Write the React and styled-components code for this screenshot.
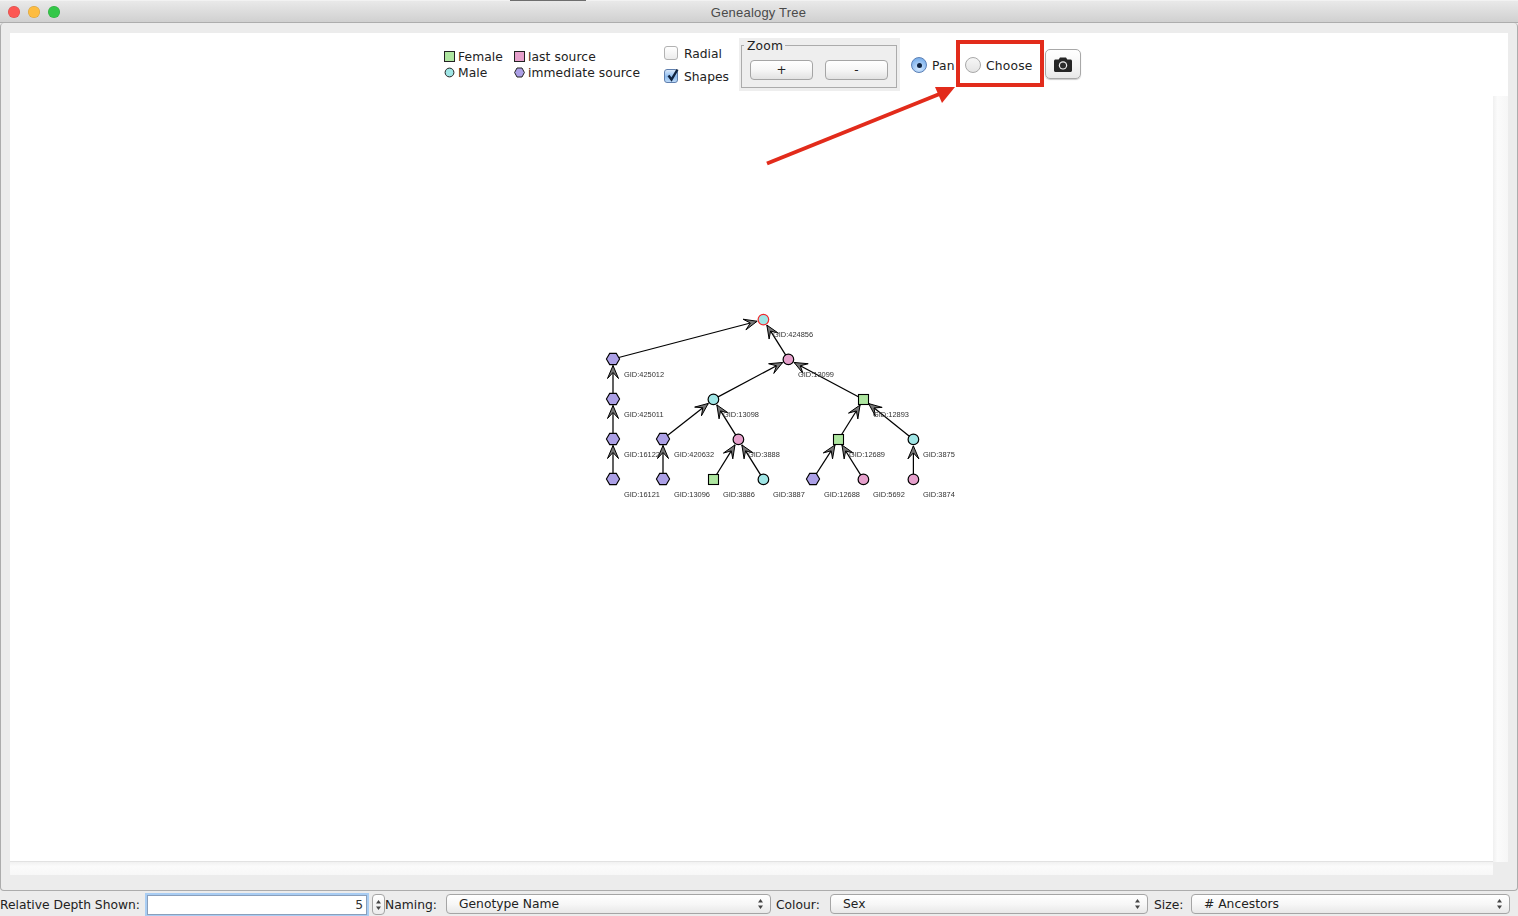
import React from 'react';
import styled, { createGlobalStyle } from 'styled-components';

const Global = createGlobalStyle`
  html, body { margin: 0; padding: 0; background: #ececec; }
  body { font-family: "DejaVu Sans", "Noto Sans", sans-serif; overflow: hidden; }
`;

const Win = styled.div`
  position: relative;
  width: 1518px;
  height: 916px;
  display: flex;
  flex-direction: column;
  background: #ececec;
  color: #222;
  font-size: 12.3px;
  overflow: hidden;
`;
const TitleBar = styled.div`
  height: 23px;
  box-sizing: border-box;
  flex: none;
  position: relative;
  display: flex;
  align-items: center;
  justify-content: center;
  background: linear-gradient(#e9e9e9, #d0d0d0);
  border-top: 1px solid #f2f2f2;
  border-bottom: 1px solid #adadad;
`;
const TopSliver = styled.span`
  position: absolute;
  left: 510px;
  top: -1px;
  width: 76px;
  height: 1px;
  background: #6e6e6e;
`;
const Lights = styled.div`
  position: absolute;
  left: 8px;
  top: 5px;
  display: flex;
  gap: 8px;
`;
const Light = styled.span`
  width: 12px;
  height: 12px;
  border-radius: 50%;
  background: ${p => p.$c};
  box-shadow: inset 0 0 0 0.5px rgba(0,0,0,0.16);
`;
const Title = styled.div`
  font-family: "Liberation Sans", sans-serif;
  font-size: 13px;
  color: #4a4a4a;
  letter-spacing: 0.2px;
  margin: 2px 1px 0 0;
`;
const Panel = styled.div`
  flex: none;
  height: 868px;
  box-sizing: border-box;
  border: 1px solid #acacac;
  border-top: none;
  border-radius: 4px;
  padding: 10px 9px 15px 9px;
  display: flex;
  flex-direction: column;
`;
const Toolbar = styled.div`
  height: 63px;
  flex: none;
  background: #fff;
  display: flex;
  align-items: flex-start;
  padding-left: 433px;
`;
const Legend = styled.div`
  display: grid;
  grid-template-columns: 70px auto;
  grid-auto-rows: 16px;
  margin-top: 16px;
  width: 221px;
  flex: none;
`;
const LegendItem = styled.div`
  display: flex;
  align-items: center;
  gap: 3px;
  line-height: 16px;
  letter-spacing: 0.08px;
`;
const Swatch = styled.svg`
  width: 11px;
  height: 11px;
  flex: none;
  margin: 0 0 2px 1px;
`;
const Checks = styled.div`
  width: 75px;
  flex: none;
  display: flex;
  flex-direction: column;
  gap: 6px;
  margin-top: 12px;
`;
const CheckRow = styled.div`
  display: flex;
  align-items: center;
  gap: 6px;
  height: 17px;
`;
const CheckBox = styled.span`
  position: relative;
  width: 14px;
  height: 14px;
  box-sizing: border-box;
  flex: none;
  margin-bottom: 1px;
  border-radius: 3px;
  border: 1px solid ${p => (p.$on ? '#5f7fae' : '#b2b2b2')};
  background: ${p => (p.$on ? 'linear-gradient(#d8e8fa, #8fbdef 55%, #bcd9f7)' : 'linear-gradient(#fff, #ececec)')};
`;
const Tick = styled.svg`
  position: absolute;
  left: 0;
  top: -3px;
  width: 16px;
  height: 16px;
`;
const ZoomWrap = styled.div`
  width: 161px;
  height: 53px;
  box-sizing: border-box;
  flex: none;
  margin-top: 5px;
  background: #eeeeee;
  padding: 7px 3px 3px 2px;
`;
const ZoomGroup = styled.div`
  position: relative;
  height: 43px;
  box-sizing: border-box;
  border: 1px solid #ababab;
  display: flex;
  gap: 12px;
  padding: 14px 8px 0 8px;
`;
const ZoomLegend = styled.span`
  position: absolute;
  left: 2px;
  top: -8px;
  background: #eeeeee;
  padding: 0 2px 0 3px;
  line-height: 16px;
  letter-spacing: 0.2px;
`;
const PushButton = styled.div`
  width: 63px;
  height: 20px;
  box-sizing: border-box;
  border: 1px solid #a5a5a5;
  border-radius: 4px;
  background: linear-gradient(#fff, #f6f6f6 50%, #e2e2e2);
  display: flex;
  align-items: center;
  justify-content: center;
  font-size: 12px;
`;
const RadioGroup = styled.div`
  flex: none;
  display: flex;
  align-items: center;
  gap: 5px;
  height: 17px;
  margin-top: 24px;
  margin-left: ${p => p.$ml}px;
  width: ${p => p.$w}px;
  letter-spacing: 0.2px;
`;
const Radio = styled.span`
  width: 16px;
  height: 16px;
  box-sizing: border-box;
  flex: none;
  margin-bottom: 1px;
  border-radius: 50%;
  display: flex;
  align-items: center;
  justify-content: center;
  border: 1px solid ${p => (p.$on ? '#5a7fb5' : '#a8a8a8')};
  background: ${p => (p.$on ? 'radial-gradient(circle at 50% 75%, #d3e8ff, #7fb2ec 75%)' : 'linear-gradient(#f6f6f6, #e4e4e4)')};
`;
const Dot = styled.span`
  width: 5px;
  height: 5px;
  border-radius: 50%;
  background: #10233f;
`;
const CameraButton = styled.div`
  flex: none;
  width: 36px;
  height: 30px;
  box-sizing: border-box;
  margin-top: 16px;
  margin-left: 11px;
  border: 1px solid #a8a8a8;
  border-radius: 5px;
  box-shadow: 0 1px 1px rgba(0,0,0,0.2);
  background: linear-gradient(#fff, #f5f5f5 60%, #e8e8e8);
  display: flex;
  align-items: center;
  justify-content: center;
`;
const ScrollRow = styled.div`
  flex: none;
  height: 766px;
  display: flex;
`;
const Canvas = styled.div`
  flex: 1;
  background: #fff;
  border-bottom: 1px solid #e2e2e2;
`;
const GraphSvg = styled.svg`
  display: block;
  width: 100%;
  height: 100%;
`;
const LabelGroup = styled.g`
  filter: grayscale(1);
  font-family: "Liberation Sans", sans-serif;
  font-size: 7.45px;
  fill: #333;
`;
const VScroll = styled.div`
  width: 15px;
  flex: none;
  background: linear-gradient(90deg, #f0f0f0, #fbfbfb 30%, #f6f6f6);
`;
const HScroll = styled.div`
  height: 13px;
  flex: none;
  margin-right: 15px;
  background: linear-gradient(#f1f1f1, #fbfbfb 35%, #f7f7f7);
`;
const BottomBar = styled.div`
  flex: none;
  height: 25px;
  display: flex;
  align-items: flex-start;
  padding: 3px 0 0 0;
  box-sizing: border-box;
`;
const BarLabel = styled.span`
  flex: none;
  width: ${p => p.$w}px;
  line-height: 20px;
  margin-top: 1px;
  white-space: nowrap;
`;
const NumberField = styled.div`
  flex: none;
  width: 220px;
  height: 20px;
  margin: 1px 0 0 1px;
  box-sizing: border-box;
  background: #fff;
  border: 1px solid #8a9fbb;
  box-shadow: 0 0 0 2px #a9cdf3;
  text-align: right;
  padding-right: 3px;
  line-height: 18px;
  color: #333;
`;
const Spinner = styled.div`
  flex: none;
  width: 13px;
  height: 21px;
  margin: 0 0 0 5px;
  box-sizing: border-box;
  border: 1px solid #a5a5a5;
  border-radius: 4px;
  background: linear-gradient(#fff, #ececec);
  display: flex;
  align-items: center;
  justify-content: center;
`;
const Select = styled.div`
  flex: none;
  width: ${p => p.$w}px;
  height: 20px;
  box-sizing: border-box;
  border: 1px solid #a5a5a5;
  border-radius: 4px;
  background: linear-gradient(#fff, #f7f7f7 50%, #e8e8e8);
  display: flex;
  align-items: center;
  justify-content: space-between;
  padding: 0 6px 0 12px;
  line-height: 18px;
`;
const SelectGap = styled.span`
  flex: none;
  width: ${p => p.$w}px;
`;
const UpDown = styled.svg`
  width: 7px;
  height: 12px;
  flex: none;
`;
const Callout = styled.div`
  position: absolute;
  left: 956px;
  top: 40px;
  width: 88px;
  height: 47px;
  box-sizing: border-box;
  border: 4px solid #e22b1b;
`;
const ArrowOverlay = styled.svg`
  position: absolute;
  left: 760px;
  top: 80px;
  width: 200px;
  height: 90px;
`;

const COLORS = { teal: '#a0e6e6', pink: '#e6a0cc', green: '#aee6a0', violet: '#aca0e6' };

const nodes = {
  root: [763.4, 319.6, 'circle', 'teal'],
  a: [788.4, 359.4, 'circle', 'pink'],
  h1: [613, 359, 'hex', 'violet'],
  h2: [613, 399, 'hex', 'violet'],
  b: [713.4, 399.4, 'circle', 'teal'],
  c: [863.5, 399.5, 'square', 'green'],
  h3: [613, 439, 'hex', 'violet'],
  h4: [663, 439, 'hex', 'violet'],
  d: [738.4, 439.4, 'circle', 'pink'],
  e: [838.5, 439.5, 'square', 'green'],
  f: [913.4, 439.4, 'circle', 'teal'],
  h5: [613, 479, 'hex', 'violet'],
  h6: [663, 479, 'hex', 'violet'],
  g: [713.5, 479.5, 'square', 'green'],
  i: [763.4, 479.4, 'circle', 'teal'],
  j: [813, 479, 'hex', 'violet'],
  k: [863.4, 479.4, 'circle', 'pink'],
  l: [913.4, 479.4, 'circle', 'pink'],
};
const edges = [
  ['h1', 'root'], ['a', 'root'], ['b', 'a'], ['c', 'a'], ['h2', 'h1'], ['h3', 'h2'], ['h5', 'h3'],
  ['h4', 'b'], ['d', 'b'], ['h6', 'h4'], ['g', 'd'], ['i', 'd'], ['e', 'c'], ['f', 'c'],
  ['j', 'e'], ['k', 'e'], ['l', 'f'],
];
const labels = [
  [773, 334, '424856'], [624, 374, '425012'], [798, 374, '13099'], [624, 414, '425011'],
  [723, 414, '13098'], [873, 414, '12893'], [624, 454, '16122'], [674, 454, '420632'],
  [748, 454, '3888'], [849, 454, '12689'], [923, 454, '3875'], [624, 494, '16121'],
  [674, 494, '13096'], [723, 494, '3886'], [773, 494, '3887'], [824, 494, '12688'],
  [873, 494, '5692'], [923, 494, '3874'],
];

const hexPoints = (x, y) => `${x - 6.6},${y} ${x - 3.3},${y - 5.6} ${x + 3.3},${y - 5.6} ${x + 6.6},${y} ${x + 3.3},${y + 5.6} ${x - 3.3},${y + 5.6}`;

function Edge({ from, to }) {
  const [x1, y1] = nodes[from];
  const [x2, y2] = nodes[to];
  const dx = x2 - x1, dy = y2 - y1;
  const len = Math.hypot(dx, dy);
  const ux = dx / len, uy = dy / len;
  const tx = x2 - ux * 6.5, ty = y2 - uy * 6.5;
  const nx = -uy, ny = ux;
  const wing = s => `${tx - ux * 13 + nx * s * 5.5},${ty - uy * 13 + ny * s * 5.5}`;
  const notch = `${tx - ux * 7},${ty - uy * 7}`;
  return (
    <g>
      <line x1={x1} y1={y1} x2={tx} y2={ty} stroke="#000" strokeWidth="1.25" />
      <polygon points={`${tx},${ty} ${wing(1)} ${notch} ${wing(-1)}`} fill="#777" stroke="#000" strokeWidth="1" />
    </g>
  );
}

function Node({ id }) {
  const [x, y, shape, color] = nodes[id];
  const fill = COLORS[color];
  const stroke = id === 'root' ? '#f0282d' : '#000';
  if (shape === 'circle') return <circle cx={x} cy={y} r="5.3" fill={fill} stroke={stroke} strokeWidth="1.2" />;
  if (shape === 'square') return <rect x={x - 5} y={y - 5} width="10" height="10" fill={fill} stroke={stroke} strokeWidth="1.1" />;
  return <polygon points={hexPoints(x, y)} fill={fill} stroke={stroke} strokeWidth="1.1" />;
}

const Graph = () => (
  <GraphSvg viewBox="10 96 1483 765" preserveAspectRatio="none">
    {edges.map(([a, b]) => <Edge key={a + b} from={a} to={b} />)}
    {Object.keys(nodes).map(id => <Node key={id} id={id} />)}
    <LabelGroup>
      {labels.map(([x, y, t]) => (
        <text key={t} x={x} y={y + 2.6}>{`GID:${t}`}</text>
      ))}
    </LabelGroup>
  </GraphSvg>
);

const SwatchIcon = ({ kind, color }) => (
  <Swatch viewBox="0 0 11 11">
    {kind === 'square' && <rect x="0.5" y="0.5" width="10" height="10" fill={color} stroke="#222" />}
    {kind === 'circle' && <circle cx="5.5" cy="5.5" r="4.4" fill={color} stroke="#222" />}
    {kind === 'hex' && <polygon points="0.6,5.5 3,1 8,1 10.4,5.5 8,10 3,10" fill={color} stroke="#222" />}
  </Swatch>
);

const Arrows = () => (
  <UpDown viewBox="0 0 7 12">
    <polygon points="3.5,1 6,4.6 1,4.6" fill="#444" />
    <polygon points="3.5,11 6,7.4 1,7.4" fill="#444" />
  </UpDown>
);

const CameraIcon = () => (
  <svg width="18" height="15" viewBox="0 0 18 15">
    <path d="M1.5 2.5h3.2L6 .6h6l1.3 1.9h3.2c.8 0 1.5.7 1.5 1.5v9.5c0 .8-.7 1.5-1.5 1.5h-15C.7 15 0 14.3 0 13.5V4c0-.8.7-1.5 1.5-1.5z" fill="#262626" />
    <circle cx="9" cy="8.4" r="4.2" fill="#eee" />
    <circle cx="9" cy="8.4" r="3" fill="#2c2c2c" />
  </svg>
);

export default function App() {
  return (
    <Win>
      <Global />
      <TitleBar>
        <TopSliver />
        <Lights>
          <Light $c="#fc5753" />
          <Light $c="#fdbc40" />
          <Light $c="#33c748" />
        </Lights>
        <Title>Genealogy Tree</Title>
      </TitleBar>
      <Panel>
        <Toolbar>
          <Legend>
            <LegendItem><SwatchIcon kind="square" color={COLORS.green} />Female</LegendItem>
            <LegendItem><SwatchIcon kind="square" color={COLORS.pink} />last source</LegendItem>
            <LegendItem><SwatchIcon kind="circle" color={COLORS.teal} />Male</LegendItem>
            <LegendItem><SwatchIcon kind="hex" color={COLORS.violet} />immediate source</LegendItem>
          </Legend>
          <Checks>
            <CheckRow><CheckBox />Radial</CheckRow>
            <CheckRow>
              <CheckBox $on>
                <Tick viewBox="0 0 16 16"><path d="M3.5 8.5 L6.5 12.5 L12.5 2.5" fill="none" stroke="#10233f" strokeWidth="2.4" /></Tick>
              </CheckBox>
              Shapes
            </CheckRow>
          </Checks>
          <ZoomWrap>
            <ZoomGroup>
              <ZoomLegend>Zoom</ZoomLegend>
              <PushButton>+</PushButton>
              <PushButton>-</PushButton>
            </ZoomGroup>
          </ZoomWrap>
          <RadioGroup $ml={11} $w={43}><Radio $on><Dot /></Radio>Pan</RadioGroup>
          <RadioGroup $ml={11} $w={69}><Radio />Choose</RadioGroup>
          <CameraButton><CameraIcon /></CameraButton>
        </Toolbar>
        <ScrollRow>
          <Canvas><Graph /></Canvas>
          <VScroll />
        </ScrollRow>
        <HScroll />
      </Panel>
      <BottomBar>
        <BarLabel $w={146}>Relative Depth Shown:</BarLabel>
        <NumberField>5</NumberField>
        <Spinner><Arrows /></Spinner>
        <BarLabel $w={61}>Naming:</BarLabel>
        <Select $w={325}>Genotype Name<Arrows /></Select>
        <SelectGap $w={5} />
        <BarLabel $w={54}>Colour:</BarLabel>
        <Select $w={318}>Sex<Arrows /></Select>
        <SelectGap $w={6} />
        <BarLabel $w={37}>Size:</BarLabel>
        <Select $w={319}># Ancestors<Arrows /></Select>
      </BottomBar>
      <Callout />
      <ArrowOverlay viewBox="760 80 200 90">
        <line x1="767" y1="163.5" x2="942" y2="93" stroke="#e22b1b" strokeWidth="4" />
        <polygon points="955,87 935,87 942,103" fill="#e22b1b" />
      </ArrowOverlay>
    </Win>
  );
}
